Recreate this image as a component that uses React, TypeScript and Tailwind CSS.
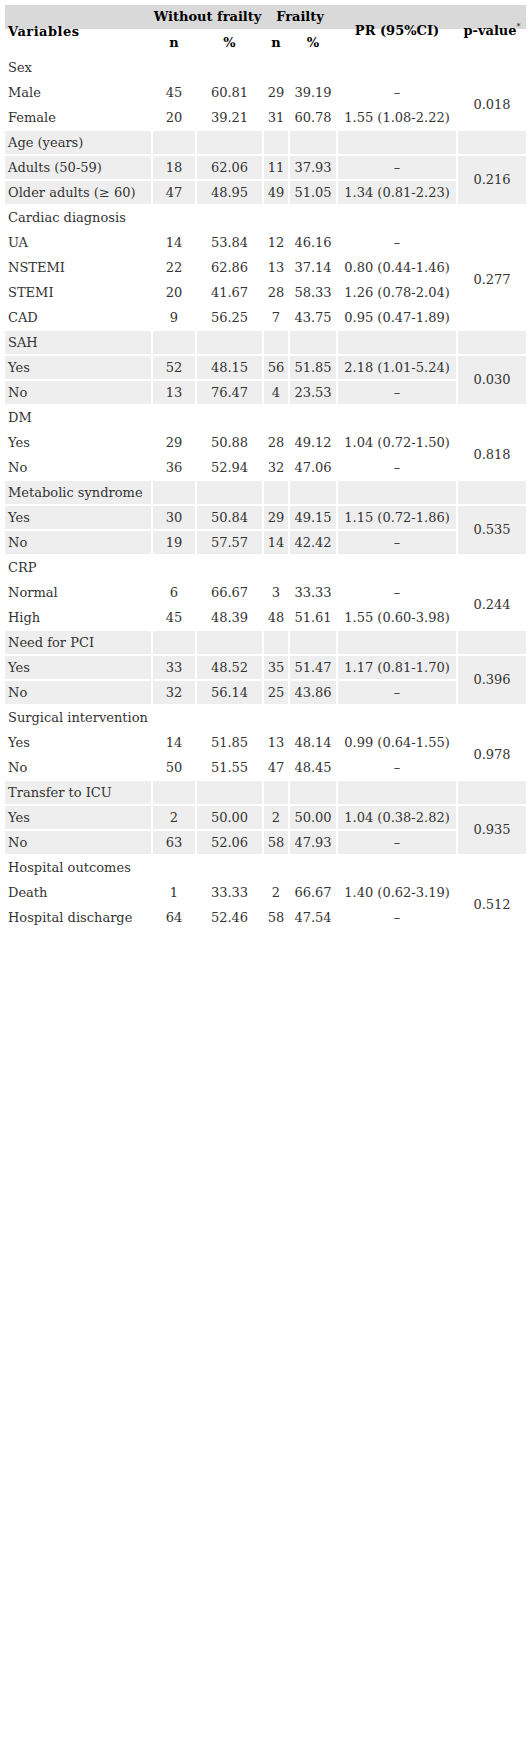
import React from "react";

type Row = [string, string, string, string, string, string];
type Group = { label: string; gray: boolean; p: string; rows: Row[] };

const groups: Group[] = [
  { label: "Sex", gray: false, p: "0.018", rows: [
    ["Male", "45", "60.81", "29", "39.19", "–"],
    ["Female", "20", "39.21", "31", "60.78", "1.55 (1.08-2.22)"],
  ] },
  { label: "Age (years)", gray: true, p: "0.216", rows: [
    ["Adults (50-59)", "18", "62.06", "11", "37.93", "–"],
    ["Older adults (≥ 60)", "47", "48.95", "49", "51.05", "1.34 (0.81-2.23)"],
  ] },
  { label: "Cardiac diagnosis", gray: false, p: "0.277", rows: [
    ["UA", "14", "53.84", "12", "46.16", "–"],
    ["NSTEMI", "22", "62.86", "13", "37.14", "0.80 (0.44-1.46)"],
    ["STEMI", "20", "41.67", "28", "58.33", "1.26 (0.78-2.04)"],
    ["CAD", "9", "56.25", "7", "43.75", "0.95 (0.47-1.89)"],
  ] },
  { label: "SAH", gray: true, p: "0.030", rows: [
    ["Yes", "52", "48.15", "56", "51.85", "2.18 (1.01-5.24)"],
    ["No", "13", "76.47", "4", "23.53", "–"],
  ] },
  { label: "DM", gray: false, p: "0.818", rows: [
    ["Yes", "29", "50.88", "28", "49.12", "1.04 (0.72-1.50)"],
    ["No", "36", "52.94", "32", "47.06", "–"],
  ] },
  { label: "Metabolic syndrome", gray: true, p: "0.535", rows: [
    ["Yes", "30", "50.84", "29", "49.15", "1.15 (0.72-1.86)"],
    ["No", "19", "57.57", "14", "42.42", "–"],
  ] },
  { label: "CRP", gray: false, p: "0.244", rows: [
    ["Normal", "6", "66.67", "3", "33.33", "–"],
    ["High", "45", "48.39", "48", "51.61", "1.55 (0.60-3.98)"],
  ] },
  { label: "Need for PCI", gray: true, p: "0.396", rows: [
    ["Yes", "33", "48.52", "35", "51.47", "1.17 (0.81-1.70)"],
    ["No", "32", "56.14", "25", "43.86", "–"],
  ] },
  { label: "Surgical intervention", gray: false, p: "0.978", rows: [
    ["Yes", "14", "51.85", "13", "48.14", "0.99 (0.64-1.55)"],
    ["No", "50", "51.55", "47", "48.45", "–"],
  ] },
  { label: "Transfer to ICU", gray: true, p: "0.935", rows: [
    ["Yes", "2", "50.00", "2", "50.00", "1.04 (0.38-2.82)"],
    ["No", "63", "52.06", "58", "47.93", "–"],
  ] },
  { label: "Hospital outcomes", gray: false, p: "0.512", rows: [
    ["Death", "1", "33.33", "2", "66.67", "1.40 (0.62-3.19)"],
    ["Hospital discharge", "64", "52.46", "58", "47.54", "–"],
  ] },
];

const font = { fontFamily: '"DejaVu Serif", serif' };

export default function App() {
  return (
    <div className="min-h-[1750px] bg-white pl-[5px] pt-[5px] text-[13px] text-[#333]" style={font}>
      <div className="grid w-[521px] grid-cols-[146px_42px_65px_24px_46px_118px_68px] grid-rows-[24px_23px_repeat(35,23px)] gap-[2px]">
        {/* header */}
        <div className="col-start-1 col-span-7 row-start-1 bg-[#d9d9d9]" />
        <div className="col-start-2 col-span-2 row-start-1 flex items-center justify-center font-bold text-black">Without frailty</div>
        <div className="col-start-4 col-span-2 row-start-1 flex items-center justify-center font-bold text-black">Frailty</div>
        <div className="col-start-1 row-start-1 row-span-2 flex items-center pl-[3px] pt-[4px] font-bold tracking-[0.5px] text-black">Variables</div>
        <div className="col-start-2 row-start-2 flex items-center justify-center font-bold text-black">n</div>
        <div className="col-start-3 row-start-2 flex items-center justify-center font-bold text-black">%</div>
        <div className="col-start-4 row-start-2 flex items-center justify-center font-bold text-black">n</div>
        <div className="col-start-5 row-start-2 flex items-center justify-center font-bold text-black">%</div>
        <div className="col-start-6 row-start-1 row-span-2 flex items-center justify-center pt-[2px] font-bold text-black">PR (95%CI)</div>
        <div className="col-start-7 row-start-1 row-span-2 flex items-center justify-center pt-[2px] font-bold text-black">
          <span>p-value</span>
          <span className="relative -top-[4px] text-[8px] font-normal">*</span>
        </div>

        {/* body */}
        {groups.map((g) => {
          const bg = g.gray ? "bg-[#eeeeee]" : "";
          const spanCls = g.rows.length === 4 ? "row-span-4" : "row-span-2";
          return (
            <React.Fragment key={g.label}>
              <div className={`flex items-center pl-[3px] ${bg}`}>{g.label}</div>
              <div className={bg} />
              <div className={bg} />
              <div className={bg} />
              <div className={bg} />
              <div className={bg} />
              <div className={bg} />
              {g.rows.map((r, i) => (
                <React.Fragment key={i}>
                  <div className={`flex items-center whitespace-nowrap pl-[3px] ${bg}`}>{r[0]}</div>
                  <div className={`flex items-center justify-center ${bg}`}>{r[1]}</div>
                  <div className={`flex items-center justify-center ${bg}`}>{r[2]}</div>
                  <div className={`flex items-center justify-center ${bg}`}>{r[3]}</div>
                  <div className={`flex items-center justify-center ${bg}`}>{r[4]}</div>
                  <div className={`flex items-center justify-center whitespace-nowrap ${bg}`}>{r[5]}</div>
                  {i === 0 && (
                    <div className={`${spanCls} flex items-center justify-center ${bg}`}>{g.p}</div>
                  )}
                </React.Fragment>
              ))}
            </React.Fragment>
          );
        })}
      </div>
    </div>
  );
}
